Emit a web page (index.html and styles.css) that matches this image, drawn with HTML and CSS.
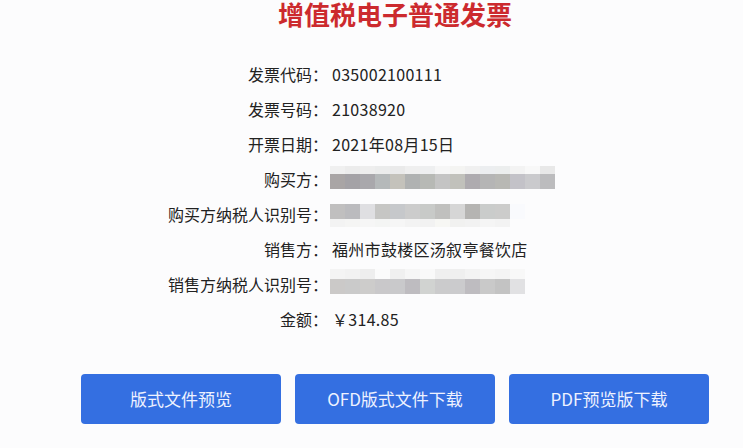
FILE: index.html
```html
<!DOCTYPE html>
<html lang="zh-CN">
<head>
<meta charset="utf-8">
<title>增值税电子普通发票</title>
<link rel="stylesheet" href="styles.css">
</head>
<body>
<div class="page">
  <h1 class="title">增值税电子普通发票</h1>
  <div class="info">
    <div class="label">发票代码：</div><div class="value">035002100111</div>
    <div class="label">发票号码：</div><div class="value">21038920</div>
    <div class="label">开票日期：</div><div class="value">2021年08月15日</div>
    <div class="label">购买方：</div>
    <div class="value">
      <div class="mosaic mosaic-buyer">
        <div class="strip strip-thin">
          <i style="background:#f0f0f0"></i><i style="background:#ececec"></i><i style="background:#eeeeee"></i><i style="background:#ebecec"></i><i style="background:#eaeaea"></i><i style="background:#efefef"></i><i style="background:#eeeff0"></i><i style="background:#f6f6f6"></i><i style="background:#f4f4f2"></i><i style="background:#f0f0f0"></i><i style="background:#eceef0"></i><i style="background:#eceeee"></i><i style="background:#f3f3f3"></i><i style="background:#f8f8f8"></i><i style="background:#e8e8e8"></i>
        </div>
        <div class="strip">
          <i style="background:#a9a5a5"></i><i style="background:#a4a2a6"></i><i style="background:#a9a8ac"></i><i style="background:#b5b9ba"></i><i style="background:#c4c2bb"></i><i style="background:#b0b2b2"></i><i style="background:#b7b9b5"></i><i style="background:#c4c4c4"></i><i style="background:#c1c1bb"></i><i style="background:#aeabaf"></i><i style="background:#b5b5b5"></i><i style="background:#b8b8b4"></i><i style="background:#c3c2c8"></i><i style="background:#cacacd"></i><i style="background:#bcbcbe"></i>
        </div>
      </div>
    </div>
    <div class="label">购买方纳税人识别号：</div>
    <div class="value">
      <div class="mosaic mosaic-buyer-id">
        <div class="strip">
          <i style="background:#c0bfbf"></i><i style="background:#bbbbbe"></i><i style="background:#dfdfe2"></i><i style="background:#c6c6c4"></i><i style="background:#c6c8cb"></i><i style="background:#cccccc"></i><i style="background:#c8cac8"></i><i style="background:#c0c0be"></i><i style="background:#d6d6d6"></i><i style="background:#b5b4b2"></i><i style="background:#cacccb"></i><i style="background:#cccccb"></i><i style="background:#f9fafd"></i>
        </div>
        <div class="strip strip-thin">
          <i style="background:#f3f3f3"></i><i style="background:#f5f5f4"></i><i style="background:#f6f6f6"></i><i style="background:#f4f5f4"></i><i style="background:#f6f6f6"></i><i style="background:#f3f3f3"></i><i style="background:#f2f2f2"></i><i style="background:#f7f7f4"></i><i style="background:#f1f1f0"></i><i style="background:#f2f2f2"></i><i style="background:#f5f5f5"></i><i style="background:#f3f3f3"></i>
        </div>
      </div>
    </div>
    <div class="label">销售方：</div><div class="value">福州市鼓楼区汤叙亭餐饮店</div>
    <div class="label">销售方纳税人识别号：</div>
    <div class="value">
      <div class="mosaic mosaic-seller-id">
        <div class="strip strip-top">
          <i style="background:#f4f4f4"></i><i style="background:#f2f2f2"></i><i style="background:#eeeeee"></i><i style="background:#fbfbfb"></i><i style="background:#f0f0f0"></i><i style="background:#f6f6f6"></i><i style="background:#f9f9f9"></i><i style="background:#efefef"></i><i style="background:#efefef"></i><i style="background:#f3f3f3"></i><i style="background:#f6f6f6"></i><i style="background:#f4f4f4"></i><i style="background:#f8f8f8"></i>
        </div>
        <div class="strip">
          <i style="background:#cbc9c8"></i><i style="background:#cacaca"></i><i style="background:#cdcccb"></i><i style="background:#c9c8ca"></i><i style="background:#c9c9cb"></i><i style="background:#bebcc0"></i><i style="background:#d1d3d1"></i><i style="background:#cbcbcc"></i><i style="background:#cbcbcd"></i><i style="background:#bebcc0"></i><i style="background:#c9c9c9"></i><i style="background:#c3c3c3"></i><i style="background:#e1e1e3"></i>
        </div>
      </div>
    </div>
    <div class="label">金额：</div><div class="value">￥314.85</div>
  </div>
  <div class="actions">
    <button class="btn">版式文件预览</button>
    <button class="btn">OFD版式文件下载</button>
    <button class="btn">PDF预览版下载</button>
  </div>
</div>
</body>
</html>
```

FILE: styles.css
```css
html, body {
  margin: 0;
  padding: 0;
  background: #fcfcfd;
}

body {
  font-family: "Noto Sans CJK SC", "Noto Sans", sans-serif;
  color: #222222;
  overflow: hidden;
}

.page {
  padding-left: 47px;
  width: 696px;
}

.title {
  margin: 0;
  text-align: center;
  font-size: 26px;
  line-height: 28px;
  font-weight: 700;
  color: #cc2a2e;
}

.info {
  margin: 28px 0 0 121px;
  display: grid;
  grid-template-columns: 160px auto;
  grid-auto-rows: 35.1px;
  align-items: center;
  font-size: 16px;
  line-height: 22px;
}

.label {
  text-align: right;
}

.value {
  padding-left: 4px;
  letter-spacing: 0.3px;
  display: flex;
  align-items: center;
}

.mosaic {
  margin-left: -2px;
  display: flex;
  flex-direction: column;
}

.mosaic-buyer { margin-top: -3px; }
.mosaic-buyer-id { margin-top: 3px; }
.mosaic-seller-id { margin-top: -5px; }

.strip {
  display: flex;
  height: 15px;
}

.strip-thin { height: 8px; }
.strip-top { height: 10px; }

.strip i {
  display: block;
  width: 15px;
  height: 100%;
}

.actions {
  margin-top: 37px;
  display: flex;
  justify-content: center;
  gap: 14px;
}

.btn {
  width: 200px;
  height: 50px;
  border: none;
  border-radius: 4px;
  background: #346fe1;
  color: #eef2ff;
  font-family: "Noto Sans CJK SC", "Noto Sans", sans-serif;
  font-size: 17px;
  padding: 0;
  cursor: pointer;
}
```
